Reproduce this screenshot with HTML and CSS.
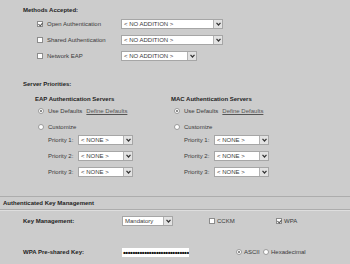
FILE: index.html
```html
<!DOCTYPE html>
<html lang="en">
<head>
<meta charset="utf-8">
<title>Security Settings</title>
<link rel="stylesheet" href="styles.css">
</head>
<body>
<div class="page">
  <section class="methods">
    <h2 class="title">Methods Accepted:</h2>
    <ul class="method-list">
      <li class="method">
        <span class="check is-checked"></span><span class="method-label">Open Authentication</span>
        <span class="select select-wide"><span class="select-text">&lt; NO ADDITION &gt;</span><span class="select-btn"><svg width="5" height="4" viewBox="0 0 5 4"><path d="M0.5 0.8 L2.5 3 L4.5 0.8" fill="none" stroke="#333" stroke-width="1.2"/></svg></span></span>
      </li>
      <li class="method">
        <span class="check"></span><span class="method-label">Shared Authentication</span>
        <span class="select select-wide"><span class="select-text">&lt; NO ADDITION &gt;</span><span class="select-btn"><svg width="5" height="4" viewBox="0 0 5 4"><path d="M0.5 0.8 L2.5 3 L4.5 0.8" fill="none" stroke="#333" stroke-width="1.2"/></svg></span></span>
      </li>
      <li class="method">
        <span class="check"></span><span class="method-label">Network EAP</span>
        <span class="select select-mid"><span class="select-text">&lt; NO ADDITION &gt;</span><span class="select-btn"><svg width="5" height="4" viewBox="0 0 5 4"><path d="M0.5 0.8 L2.5 3 L4.5 0.8" fill="none" stroke="#333" stroke-width="1.2"/></svg></span></span>
      </li>
    </ul>
  </section>

  <section class="servers">
    <h2 class="title">Server Priorities:</h2>
    <div class="server-cols">
      <div class="server-col">
        <h3 class="col-title">EAP Authentication Servers</h3>
        <div class="radio-row"><span class="radio is-on"></span><span>Use Defaults</span><a class="link">Define Defaults</a></div>
        <div class="radio-row row-custom"><span class="radio"></span><span>Customize</span></div>
        <div class="priority-row"><span class="priority-label">Priority 1:</span><span class="select select-small"><span class="select-text">&lt; NONE &gt;</span><span class="select-btn"><svg width="5" height="4" viewBox="0 0 5 4"><path d="M0.5 0.8 L2.5 3 L4.5 0.8" fill="none" stroke="#333" stroke-width="1.2"/></svg></span></span></div>
        <div class="priority-row"><span class="priority-label">Priority 2:</span><span class="select select-small"><span class="select-text">&lt; NONE &gt;</span><span class="select-btn"><svg width="5" height="4" viewBox="0 0 5 4"><path d="M0.5 0.8 L2.5 3 L4.5 0.8" fill="none" stroke="#333" stroke-width="1.2"/></svg></span></span></div>
        <div class="priority-row"><span class="priority-label">Priority 3:</span><span class="select select-small"><span class="select-text">&lt; NONE &gt;</span><span class="select-btn"><svg width="5" height="4" viewBox="0 0 5 4"><path d="M0.5 0.8 L2.5 3 L4.5 0.8" fill="none" stroke="#333" stroke-width="1.2"/></svg></span></span></div>
      </div>
      <div class="server-col server-col-right">
        <h3 class="col-title">MAC Authentication Servers</h3>
        <div class="radio-row"><span class="radio is-on"></span><span>Use Defaults</span><a class="link">Define Defaults</a></div>
        <div class="radio-row row-custom"><span class="radio"></span><span>Customize</span></div>
        <div class="priority-row"><span class="priority-label">Priority 1:</span><span class="select select-small"><span class="select-text">&lt; NONE &gt;</span><span class="select-btn"><svg width="5" height="4" viewBox="0 0 5 4"><path d="M0.5 0.8 L2.5 3 L4.5 0.8" fill="none" stroke="#333" stroke-width="1.2"/></svg></span></span></div>
        <div class="priority-row"><span class="priority-label">Priority 2:</span><span class="select select-small"><span class="select-text">&lt; NONE &gt;</span><span class="select-btn"><svg width="5" height="4" viewBox="0 0 5 4"><path d="M0.5 0.8 L2.5 3 L4.5 0.8" fill="none" stroke="#333" stroke-width="1.2"/></svg></span></span></div>
        <div class="priority-row"><span class="priority-label">Priority 3:</span><span class="select select-small"><span class="select-text">&lt; NONE &gt;</span><span class="select-btn"><svg width="5" height="4" viewBox="0 0 5 4"><path d="M0.5 0.8 L2.5 3 L4.5 0.8" fill="none" stroke="#333" stroke-width="1.2"/></svg></span></span></div>
      </div>
    </div>
  </section>

  <div class="band">Authenticated Key Management</div>

  <section class="akm">
    <div class="akm-row">
      <span class="akm-label">Key Management:</span>
      <div class="akm-controls">
        <span class="select select-key"><span class="select-text">Mandatory</span><span class="select-btn"><svg width="5" height="4" viewBox="0 0 5 4"><path d="M0.5 0.8 L2.5 3 L4.5 0.8" fill="none" stroke="#333" stroke-width="1.2"/></svg></span></span>
        <span class="opt opt-cckm"><span class="check"></span><span>CCKM</span></span>
        <span class="opt"><span class="check is-checked"></span><span>WPA</span></span>
      </div>
    </div>
    <div class="akm-row akm-row-psk">
      <span class="akm-label">WPA Pre-shared Key:</span>
      <div class="akm-controls">
        <span class="psk">••••••••••••••••••••••••••••</span>
        <span class="opt opt-ascii"><span class="radio is-on"></span><span>ASCII</span></span>
        <span class="opt"><span class="radio"></span><span>Hexadecimal</span></span>
      </div>
    </div>
  </section>
</div>
</body>
</html>
```

FILE: styles.css
```css
* {
  box-sizing: border-box;
  margin: 0;
  padding: 0;
}

html, body {
  width: 350px;
  height: 264px;
  overflow: hidden;
}

body {
  background: #cccccc;
  font-family: "Liberation Sans", Arial, sans-serif;
  font-size: 6px;
  color: #3a3a3a;
}

.page {
  padding-top: 6px;
}

.title {
  font-size: 6px;
  font-weight: bold;
  line-height: 8px;
  color: #1e1e1e;
  padding-left: 23px;
}

.method-list {
  list-style: none;
  margin-top: 2px;
}

.method {
  display: flex;
  align-items: center;
  height: 16px;
  padding-left: 37px;
}

.check {
  flex: none;
  position: relative;
  width: 6px;
  height: 6px;
  background: #fff;
  border: 1px solid #8c8c8c;
  margin-right: 4px;
}

.check.is-checked::after {
  content: "";
  position: absolute;
  left: 1px;
  top: 0;
  width: 2px;
  height: 3px;
  border-right: 1px solid #555;
  border-bottom: 1px solid #555;
  transform: rotate(40deg);
}

.method-label {
  width: 74px;
  white-space: nowrap;
}

.select {
  display: flex;
  height: 10px;
  background: #fff;
  border: 1px solid #a6a6a6;
}

.select-wide { width: 102px; }
.select-mid { width: 76px; }
.select-small { width: 55px; }
.select-key { width: 51px; }

.select-text {
  flex: 1;
  min-width: 0;
  padding-left: 2px;
  line-height: 8px;
  white-space: nowrap;
  overflow: hidden;
  color: #3a3a3a;
}

.select-btn {
  flex: none;
  width: 9px;
  display: flex;
  align-items: center;
  justify-content: center;
  background: #e2e2e2;
  border-left: 1px solid #b2b2b2;
}

.servers {
  margin-top: 16px;
}

.server-cols {
  display: grid;
  grid-template-columns: 136px 137px;
  padding-left: 35px;
  margin-top: 7px;
}

.col-title {
  font-size: 6px;
  font-weight: bold;
  line-height: 8px;
  color: #1e1e1e;
  white-space: nowrap;
}

.radio-row {
  display: flex;
  align-items: center;
  height: 15px;
  padding-left: 3px;
  white-space: nowrap;
}

.row-custom {
  height: 14px;
  padding-top: 3px;
}

.radio {
  flex: none;
  position: relative;
  width: 6px;
  height: 6px;
  border-radius: 50%;
  background: #fff;
  border: 1px solid #9a9a9a;
  margin-right: 4px;
}

.radio.is-on::after {
  content: "";
  position: absolute;
  left: 1px;
  top: 1px;
  width: 2px;
  height: 2px;
  border-radius: 50%;
  background: #666;
}

.link {
  margin-left: 4px;
  text-decoration: underline;
  color: #555;
}

.priority-row {
  display: flex;
  align-items: center;
  height: 16px;
  padding-left: 13px;
}

.priority-label {
  width: 30px;
  white-space: nowrap;
}

.band {
  margin-top: 16px;
  height: 14px;
  line-height: 12px;
  padding-left: 3px;
  font-weight: bold;
  color: #1e1e1e;
  border-top: 1px solid #acacac;
  border-bottom: 1px solid #acacac;
  box-shadow: 0 1px 0 #dedede;
}

.akm-row {
  display: grid;
  grid-template-columns: 99px 1fr;
  align-items: center;
  height: 14px;
  margin-top: 4px;
  padding-left: 23px;
}

.akm-row-psk {
  margin-top: 17px;
}

.akm-label {
  font-weight: bold;
  color: #1e1e1e;
  white-space: nowrap;
}

.akm-controls {
  display: flex;
  align-items: center;
}

.opt {
  display: flex;
  align-items: center;
  white-space: nowrap;
}

.opt .check,
.opt .radio {
  margin-right: 2px;
}

.opt-cckm {
  margin-left: 36px;
  width: 67px;
}

.psk {
  width: 67px;
  height: 9px;
  background: #fff;
  font-size: 8px;
  font-weight: bold;
  line-height: 9px;
  padding-left: 1px;
  overflow: hidden;
  white-space: nowrap;
  letter-spacing: -0.45px;
  color: #111;
}

.opt-ascii {
  margin-left: 47px;
  width: 27px;
}
```
